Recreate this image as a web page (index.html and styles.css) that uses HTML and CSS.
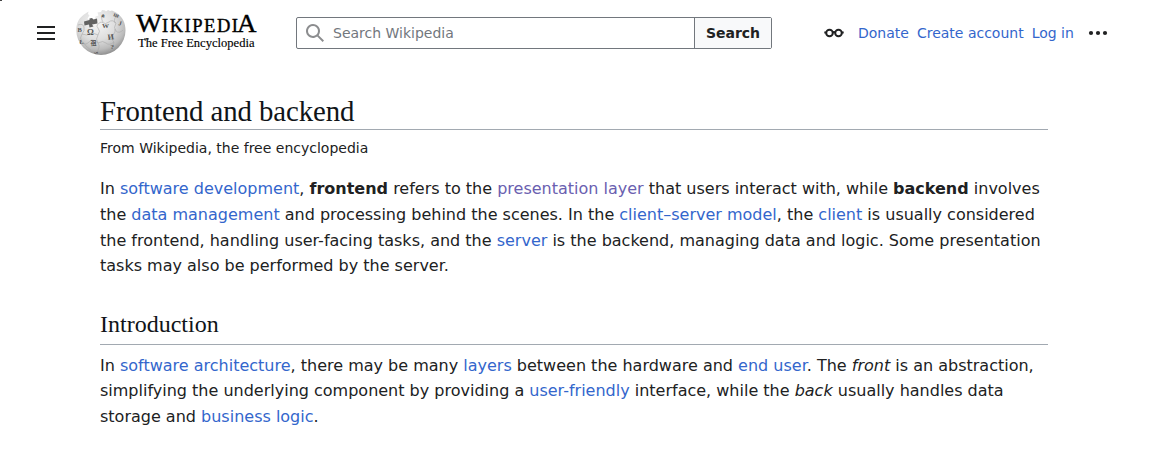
FILE: index.html
```html
<!DOCTYPE html>
<html lang="en">
<head>
<meta charset="utf-8">
<title>Frontend and backend - Wikipedia</title>
<link rel="stylesheet" href="styles.css">
</head>
<body>
<span class="corner"></span>
<header class="header">
  <svg class="menu" width="20" height="20" viewBox="0 0 20 20"><path d="M1 3h18v2H1zM1 9h18v2H1zM1 15h18v2H1z" fill="#202122"/></svg>
  <a class="logo">
    <svg class="globe" width="50" height="46" viewBox="0 0 50 46">
      <defs>
        <radialGradient id="ball" cx=".42" cy=".3" r=".72">
          <stop offset="0" stop-color="#f6f6f6"/><stop offset=".5" stop-color="#dedede"/><stop offset=".8" stop-color="#bcbcbc"/><stop offset="1" stop-color="#8c8c8c"/>
        </radialGradient>
      </defs>
      <path d="M8 4.500 12.500 1.500 12 4l1.500 1.500-2 3 2 2 5-1 1-3 3-1-1-3 3.500-.5 1-2 3 .5 1 1 2-1.500 2 1 2-.5 4 2C47 7 49.500 13 49.500 20.500A24.750 24.500 0 0 1 25 45 24.750 24.500 0 0 1 .3 20.500C.3 13 3 8 8 4.500z" fill="url(#ball)"/>
      <path d="m8 11.500 5.500-1.500 0-1.500 2.500-.5 1.500 1.500 3.500-1 .5 5-5.500 1 1.500 2-4 1-.5-3-4.500 1z" fill="#626262"/>
      <path d="M2 15q5-2 6 2t-2 7q5 2 8 0t8 1q3-4 0-7t3-6q5 3 8 0t7 1q-3 5 0 8t7-1M22 25q-3 4 0 8t-2 10M22 33q5-3 8 0t8-1q-4-4-1-7t2-6M38 32q0 5-5 9M6 24q-3 4 0 8t7 0 9 1M7 32q3 5 8 8M27 12q-3-4 1-8M39 13q-2-5 3-8" fill="none" stroke="#aaa" stroke-width=".6"/>
      <g class="glyphs">
        <text x="11" y="25" font-size="8.500">Ω</text>
        <text x="26" y="18" font-size="7">W</text>
        <text x="32" y="30" font-size="8" transform="rotate(-8 32 30)">И</text>
        <text x="14.500" y="34.500" font-size="6" class="cjk">祖</text>
        <text x="34.500" y="38.500" font-size="7">?</text>
        <text x="42" y="15" font-size="6.500" transform="rotate(15 42 15)">J</text>
        <text x="1.500" y="22" font-size="6.500">В</text>
        <text x="3.500" y="34" font-size="6">Ł</text>
        <text x="37" y="6" font-size="6.500" transform="rotate(20 37 6)">ш</text>
        <text x="25" y="7" font-size="5" transform="rotate(15 25 7)">ค</text>
        <text x="18" y="43" font-size="4">یی</text>
      </g>
    </svg>
    <svg class="wordmark" width="124" height="52" viewBox="0 -4 124 52">
      <g class="name">
        <text x="2" y="21.200" font-size="25.500" textLength="26" lengthAdjust="spacingAndGlyphs">W</text>
        <text x="28" y="21.200" font-size="18.500" textLength="76" lengthAdjust="spacing">IKIPEDI</text>
        <text x="103" y="21.200" font-size="25.500" textLength="19.500" lengthAdjust="spacingAndGlyphs">A</text>
      </g>
      <text x="4" y="36.200" font-size="13" textLength="116.500" lengthAdjust="spacingAndGlyphs" class="tag">The Free Encyclopedia</text>
      <path d="M10 27.900h5" stroke="#111" stroke-width=".8"/>
    </svg>
  </a>
  <form class="search">
    <div class="field">
      <svg width="20" height="20" viewBox="0 0 20 20"><path d="M12.200 13.600a7 7 0 1 1 1.400-1.400l5.400 5.400-1.400 1.400zM3 8a5 5 0 1 0 10 0A5 5 0 0 0 3 8" fill="#8c8d8f"/></svg>
      <span>Search Wikipedia</span>
    </div>
    <span class="button">Search</span>
  </form>
  <nav class="links">
    <svg class="glasses" width="20" height="10" viewBox="0 0 20 10"><g fill="none" stroke="#202122" stroke-width="2"><circle cx="5.500" cy="5" r="3.300"/><circle cx="14.500" cy="5" r="3.300"/><path d="M8.500 4.600q1.500-1 3 0M2.400 4.600H.3M17.600 4.600h2.100"/></g></svg>
    <a>Donate</a><a>Create account</a><a>Log in</a>
    <svg class="dots" width="20" height="6" viewBox="0 0 20 6" fill="#202122"><circle cx="3" cy="3" r="2.100"/><circle cx="10" cy="3" r="2.100"/><circle cx="17" cy="3" r="2.100"/></svg>
  </nav>
</header>
<main class="content">
  <h1>Frontend and backend</h1>
  <div class="tagline">From Wikipedia, the free encyclopedia</div>
  <p class="lead">In <a>software development</a>, <b>frontend</b> refers to the <a class="visited">presentation layer</a> that users interact with, while <b>backend</b> involves the <a>data management</a> and processing behind the scenes. In the <a>client–server model</a>, the <a>client</a> is usually considered the frontend, handling user-facing tasks, and the <a>server</a> is the backend, managing data and logic. Some presentation tasks may also be performed by the server.</p>
  <h2>Introduction</h2>
  <p>In <a>software architecture</a>, there may be many <a>layers</a> between the hardware and <a>end user</a>. The <i>front</i> is an abstraction, simplifying the underlying component by providing a <a>user-friendly</a> interface, while the <i>back</i> usually handles data storage and <a>business logic</a>.</p>
</main>
</body>
</html>
```

FILE: styles.css
```css
* { box-sizing: border-box; }
body {
  margin: 0;
  height: 451px;
  overflow: hidden;
  background: #fff;
  color: #202122;
  font-family: "DejaVu Sans", sans-serif;
  font-size: 14px;
}
svg { display: block; flex: none; }
a { color: #36c; }
.corner {
  position: absolute;
  left: 0;
  top: 0;
  width: 2px;
  height: 1px;
  background: #444;
}
.header {
  display: flex;
  align-items: center;
  height: 66px;
  padding-left: 36px;
}
.logo { display: flex; align-items: center; margin-left: 20px; }
.globe { font-family: "Liberation Serif", serif; }
.glyphs { fill: #555; font-weight: bold; }
.cjk { font-family: "Noto Sans CJK SC", sans-serif; }
.wordmark { margin-left: 8px; font-family: "Liberation Serif", serif; }
.name { fill: #000; stroke: #000; stroke-width: .4px; }
.tag { fill: #000; stroke: #000; stroke-width: .15px; }
.search {
  display: flex;
  width: 476px;
  height: 32px;
  margin-left: 38px;
  border: 1px solid #72777d;
  border-radius: 2px;
}
.field {
  flex: 1;
  display: flex;
  align-items: center;
  gap: 8px;
  padding-left: 8px;
  color: #72777d;
}
.button {
  width: 77px;
  border-left: 1px solid #72777d;
  background: #f8f9fa;
  font-weight: bold;
  line-height: 30px;
  text-align: center;
}
.links { display: flex; align-items: center; gap: 8px; margin-left: 52px; }
.glasses { margin-right: 6px; }
.dots { margin-left: 6px; }
.content { width: 948px; margin: 27px 0 0 100px; }
h1, h2 {
  margin: 0;
  color: #101418;
  font-family: "Liberation Serif", serif;
  font-weight: normal;
  border-bottom: 1px solid #a2a9b1;
}
h1 { height: 37px; font-size: 28.8px; line-height: 36px; letter-spacing: -.08px; }
.tagline { margin-top: 9px; line-height: 18px; }
p { margin: 0; font-size: 16px; line-height: 25.6px; }
.lead { margin-top: 19.4px; }
h2 { height: 41px; margin: 25.3px 0 7.6px; font-size: 24px; line-height: 41px; }
.visited { color: #6a60b0; }
```
